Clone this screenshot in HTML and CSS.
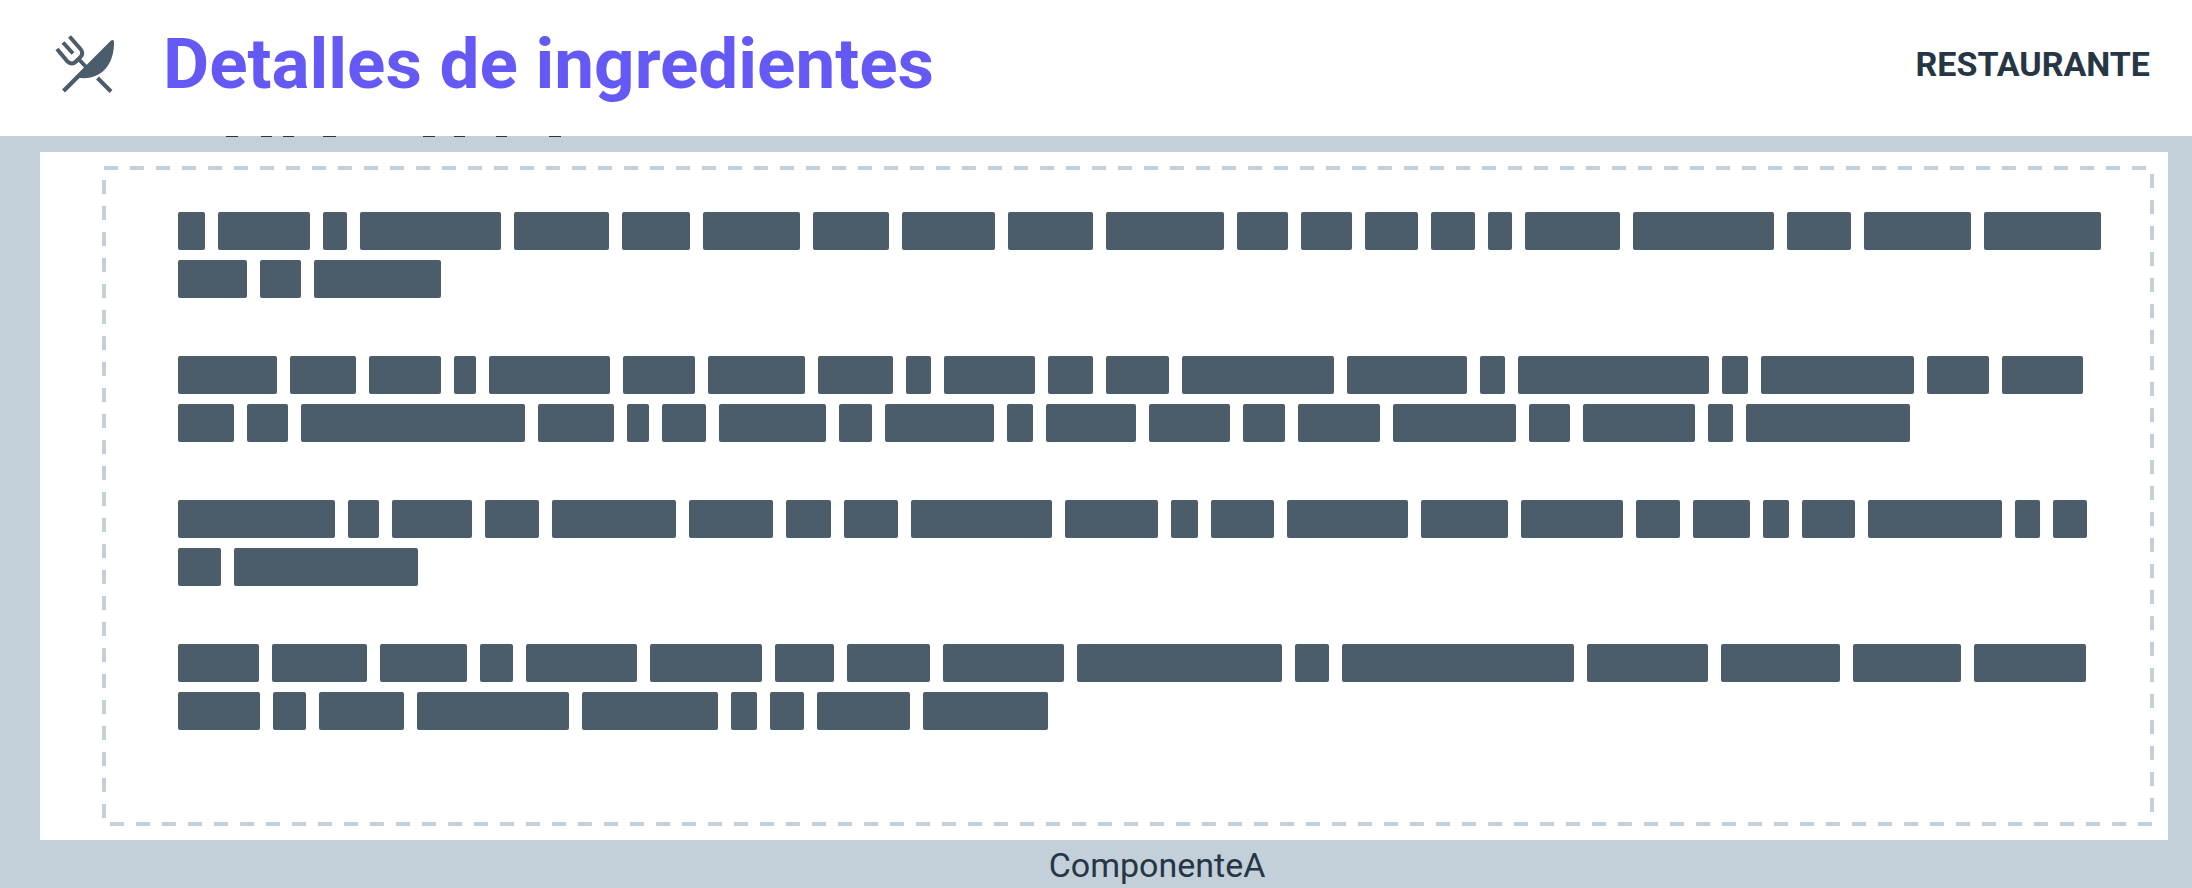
FILE: index.html
```
<!DOCTYPE html>
<html lang="es">
<head>
<meta charset="utf-8">
<meta name="viewport" content="width=device-width, initial-scale=1">
<title>Detalles de ingredientes</title>
<link rel="stylesheet" href="styles.css">
</head>
<body>
<header class="topbar">
  <svg class="logo" viewBox="55 35 60 58" aria-hidden="true">
    <g fill="none" stroke="currentColor" stroke-width="4">
      <path d="M57 49L67.500 61.500Q72 65.500 76 61.500L80.500 57Q84 53 80.500 49L69.500 36.500"/>
      <path d="M63 42.500L73 53.500"/>
      <path d="M79 59.500L87 68"/>
      <path d="M97.500 78L111 91.500"/>
    </g>
    <path fill="currentColor" d="M110.500 41Q113 39 114 41.500C114.500 63 103 80 79.500 78L65 92.500L62 89.500Z"/>
  </svg>
  <h1 class="title">Detalles de ingredientes</h1>
  <span class="category">RESTAURANTE</span>
</header>
<main class="content">
  <svg class="peek" width="600" height="1" aria-hidden="true">
    <path d="M226 0h12v1h-12zM261 0h11v1h-11zM283 0h11v1h-11zM323 0h13v1h-13zM423 0h12v1h-12zM454 0h11v1h-11zM496 0h11v1h-11zM549 0h12v1h-12z"/>
  </svg>
  <figure class="component">
    <div class="panel">
      <div class="frame">
        <svg class="outline" aria-hidden="true"><rect width="100%" height="100%"/></svg>
        <div class="block">
          <i style="width:27px"></i><i style="width:92px"></i><i style="width:24px"></i><i style="width:141px"></i><i style="width:95px"></i><i style="width:68px"></i><i style="width:97px"></i><i style="width:76px"></i><i style="width:93px"></i><i style="width:85px"></i><i style="width:118px"></i><i style="width:51px"></i><i style="width:51px"></i><i style="width:53px"></i><i style="width:44px"></i><i style="width:24px"></i><i style="width:95px"></i><i style="width:141px"></i><i style="width:64px"></i><i style="width:107px"></i><i style="width:117px"></i>
          <i style="width:69px"></i><i style="width:41px"></i><i style="width:127px"></i>
        </div>
        <div class="block">
          <i style="width:99px"></i><i style="width:66px"></i><i style="width:72px"></i><i style="width:22px"></i><i style="width:121px"></i><i style="width:72px"></i><i style="width:97px"></i><i style="width:75px"></i><i style="width:25px"></i><i style="width:91px"></i><i style="width:45px"></i><i style="width:63px"></i><i style="width:152px"></i><i style="width:120px"></i><i style="width:25px"></i><i style="width:191px"></i><i style="width:26px"></i><i style="width:153px"></i><i style="width:62px"></i><i style="width:81px"></i>
          <i style="width:56px"></i><i style="width:41px"></i><i style="width:224px"></i><i style="width:76px"></i><i style="width:22px"></i><i style="width:44px"></i><i style="width:107px"></i><i style="width:33px"></i><i style="width:109px"></i><i style="width:26px"></i><i style="width:90px"></i><i style="width:81px"></i><i style="width:42px"></i><i style="width:82px"></i><i style="width:123px"></i><i style="width:41px"></i><i style="width:112px"></i><i style="width:25px"></i><i style="width:164px"></i>
        </div>
        <div class="block">
          <i style="width:157px"></i><i style="width:31px"></i><i style="width:80px"></i><i style="width:54px"></i><i style="width:124px"></i><i style="width:84px"></i><i style="width:45px"></i><i style="width:54px"></i><i style="width:141px"></i><i style="width:93px"></i><i style="width:27px"></i><i style="width:63px"></i><i style="width:121px"></i><i style="width:87px"></i><i style="width:102px"></i><i style="width:44px"></i><i style="width:57px"></i><i style="width:26px"></i><i style="width:53px"></i><i style="width:134px"></i><i style="width:25px"></i><i style="width:34px"></i>
          <i style="width:43px"></i><i style="width:184px"></i>
        </div>
        <div class="block">
          <i style="width:81px"></i><i style="width:95px"></i><i style="width:87px"></i><i style="width:33px"></i><i style="width:111px"></i><i style="width:112px"></i><i style="width:59px"></i><i style="width:83px"></i><i style="width:121px"></i><i style="width:205px"></i><i style="width:34px"></i><i style="width:232px"></i><i style="width:121px"></i><i style="width:119px"></i><i style="width:108px"></i><i style="width:112px"></i>
          <i style="width:82px"></i><i style="width:33px"></i><i style="width:85px"></i><i style="width:152px"></i><i style="width:136px"></i><i style="width:26px"></i><i style="width:34px"></i><i style="width:93px"></i><i style="width:125px"></i>
        </div>
      </div>
    </div>
    <figcaption class="caption">ComponenteA</figcaption>
  </figure>
</main>
</body>
</html>
```
FILE: styles.css
```
* {
  box-sizing: border-box;
}

body {
  margin: 0;
  min-height: 100vh;
  background: #c3cfd9;
  color: #263645;
  font-family: Roboto, "Liberation Sans", sans-serif;
}

.topbar {
  display: flex;
  align-items: center;
  padding: 24px 42px 32px 55px;
  background: #fff;
}

.logo {
  width: 60px;
  height: 58px;
  color: #4b5c6a;
}

.title {
  flex: 1;
  margin: 0 0 0 48px;
  color: #6559f5;
  font-size: 71px;
  line-height: 80px;
  font-weight: 700;
}

.category {
  font-size: 34px;
  line-height: 80px;
  font-weight: 700;
}

.peek {
  display: block;
  fill: #263645;
}

.component {
  margin: 15px 24px 0 40px;
}

.panel {
  padding: 16px 16px 16px 64px;
  background: #fff;
}

.frame {
  position: relative;
  display: flex;
  flex-direction: column;
  gap: 58px;
  padding: 44px 40px 94px 74px;
}

.outline {
  position: absolute;
  inset: 0;
  width: 100%;
  height: 100%;
  overflow: visible;
  fill: none;
  stroke: #c3cfd9;
  stroke-width: 4px;
  stroke-dasharray: 14 12;
}

.block {
  display: flex;
  flex-wrap: wrap;
  gap: 10px 13px;
}

.block i {
  height: 38px;
  border-radius: 2px;
  background: #4b5c6a;
}

.caption {
  padding: 2px 0 0 106px;
  font-size: 34px;
  line-height: 46px;
  text-align: center;
}
```
